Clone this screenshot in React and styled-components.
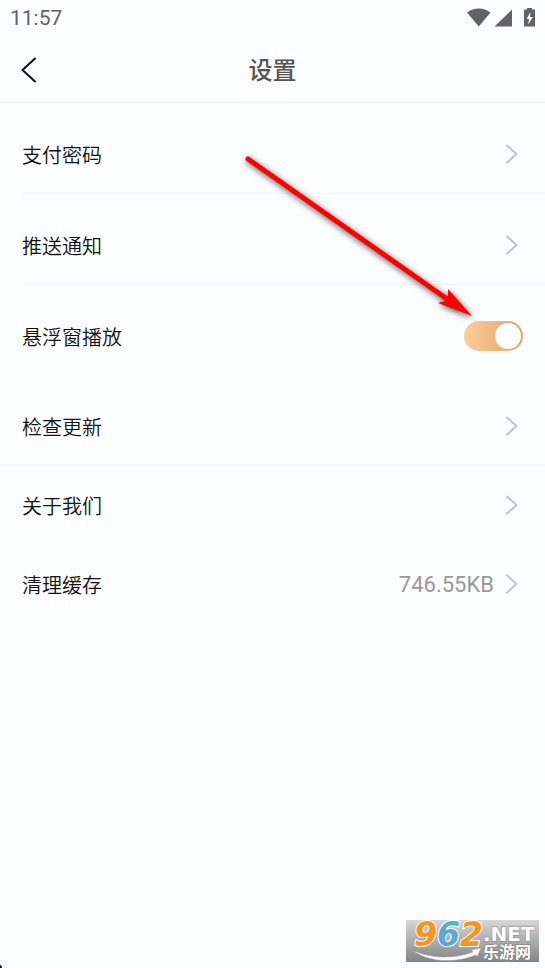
import React, { useState } from "react";
import styled, { createGlobalStyle } from "styled-components";

const SettingsPage = () => {
  const [floating, setFloating] = useState(true);

  return (
    <>
      <GlobalStyle />
      <Screen>
        <StatusBar>
          <time>11:57</time>
          <StatusIcons />
        </StatusBar>
        <NavBar>
          <BackButton type="button" aria-label="返回">
            <svg width="16" height="26" viewBox="0 0 16 26">
              <path d="M14 1.5 L1.5 13 L14 24.5" />
            </svg>
          </BackButton>
          <Title>设置</Title>
        </NavBar>

        <main>
          <LinkRow title="支付密码" spaced divider="inset" />
          <LinkRow title="推送通知" spaced divider="inset" />
          <Row as="label" $spaced>
            <RowTitle>悬浮窗播放</RowTitle>
            <Switch
              type="checkbox"
              role="switch"
              checked={floating}
              onChange={(e) => setFloating(e.target.checked)}
            />
          </Row>
          <LinkRow title="检查更新" spaced divider="full" />
          <LinkRow title="关于我们" divider="clear" />
          <LinkRow title="清理缓存" value="746.55KB" />
        </main>

        <PointerArrow />
        <SiteLogo />
        <Corner viewBox="0 0 3 3" aria-hidden="true">
          <path d="M0 0 H1 V1 H2 V3 H0 Z" fill="#222" />
        </Corner>
      </Screen>
    </>
  );
};

const LinkRow = ({ title, value, spaced, divider }) => (
  <>
    <Row href="#" $spaced={spaced}>
      <RowTitle>{title}</RowTitle>
      <RowEnd>
        {value && <Value>{value}</Value>}
        <Chevron width="12" height="20" viewBox="0 0 12 20" aria-hidden="true">
          <path d="M1 1.5 L10.5 10 L1 18.5" />
        </Chevron>
      </RowEnd>
    </Row>
    {divider && <Divider $kind={divider} />}
  </>
);

// wifi, signal, charging battery
const StatusIcons = () => (
  <svg width="70" height="20" viewBox="0 0 70 20" fill="#636363" aria-hidden="true">
    <path d="M0 4.5 C7 -0.8 16.5 -0.8 23.5 4.5 L11.8 18.5 Z" />
    <path d="M45 1.5 V18.5 H27.5 Z" />
    <path d="M60 0 H65 V1.5 H68 V18.5 H57 V1.5 H60 Z" />
    <path d="M63.5 4 L59.5 11 H62 L61.3 16.5 L65.8 9 H63 Z" fill="#fff" />
  </svg>
);

const PointerArrow = () => (
  <Arrow viewBox="0 0 250 180" aria-hidden="true">
    <path
      d="M13 19 L212 159"
      stroke="#f00"
      strokeWidth="5"
      strokeLinecap="round"
    />
    <path d="M237 176 L203 163 L210 161 L213 156 L213 149 Z" fill="#f00" />
  </Arrow>
);

const SiteLogo = () => (
  <Logo viewBox="0 0 133 42" role="img" aria-label="962.NET 乐游网">
    <defs>
      <linearGradient id="plate" x1="0" y1="0" x2="0" y2="1">
        <stop offset="0" stopColor="#d6d6d6" />
        <stop offset="1" stopColor="#858585" />
      </linearGradient>
    </defs>
    <rect width="133" height="42" fill="url(#plate)" />
    <path
      d="M6 30 C25 39 48 39 67 32 L65 30 L75 28 L71 37 L70 35 C47 44 22 42 6 30 Z"
      fill="#fff"
      stroke="#999"
      strokeWidth="0.5"
    />
    <LogoDigits x="8" y="26">
      <tspan fill="#f7931e">9</tspan>
      <tspan fill="#58a9dc">6</tspan>
      <tspan fill="#f7931e">2</tspan>
    </LogoDigits>
    <LogoDomain x="77" y="21">.NET</LogoDomain>
    <LogoName x="77" y="38">乐游网</LogoName>
  </Logo>
);

// styles
const GlobalStyle = createGlobalStyle`
  * {
    box-sizing: border-box;
  }

  body {
    margin: 0;
    background: #fcfdff;
    font-family: "Noto Sans CJK SC", sans-serif;
  }
`;

const Screen = styled.div`
  position: relative;
  min-height: 100vh;
  overflow: hidden;
`;

const StatusBar = styled.div`
  display: flex;
  align-items: center;
  justify-content: space-between;
  height: 38px;
  padding: 0 8px 2px 10px;
  color: #636363;
  font-family: Roboto, sans-serif;
  font-size: 21px;
`;

const NavBar = styled.header`
  display: grid;
  grid-template-columns: 60px 1fr 60px;
  align-items: center;
  height: 65px;
  border-bottom: 1px solid #ececee;
`;

const BackButton = styled.button`
  display: flex;
  align-items: center;
  height: 100%;
  padding: 0 0 0 21px;
  border: none;
  background: none;
  cursor: pointer;

  path {
    fill: none;
    stroke: #111;
    stroke-width: 2;
    stroke-linecap: round;
    stroke-linejoin: round;
  }
`;

const Title = styled.h1`
  margin: 0;
  padding-bottom: 2px;
  color: #555;
  font-size: 24px;
  line-height: 36px;
  font-weight: 500;
  text-align: center;
`;

const Row = styled.a`
  display: flex;
  align-items: center;
  justify-content: space-between;
  height: 78px;
  margin-top: ${({ $spaced }) => ($spaced ? "12px" : "0")};
  padding: 0 22px;
  color: #111;
  font-size: 20px;
  line-height: 30px;
  text-decoration: none;
  cursor: pointer;
`;

const RowTitle = styled.span`
  padding-top: 2px;
  font-weight: 350;
`;

const Divider = styled.hr`
  height: 1px;
  margin: 0 0 0 ${({ $kind }) => ($kind === "inset" ? "22px" : "0")};
  border: none;
  background: ${({ $kind }) => ($kind === "clear" ? "transparent" : "#f3f4f5")};
`;

const RowEnd = styled.span`
  display: flex;
  align-items: center;
  gap: 12px;
  padding-right: 5px;
`;

const Value = styled.span`
  padding-top: 2px;
  color: #999;
  font-family: Roboto, sans-serif;
  font-size: 22px;
`;

const Chevron = styled.svg`
  path {
    fill: none;
    stroke: #c4c4c6;
    stroke-width: 2;
    stroke-linecap: round;
    stroke-linejoin: round;
  }
`;

const Switch = styled.input`
  appearance: none;
  display: flex;
  align-items: center;
  justify-content: ${({ checked }) => (checked ? "flex-end" : "flex-start")};
  width: 59px;
  height: 30px;
  margin: 0;
  padding: 0 2px;
  border-radius: 15px;
  background: ${({ checked }) =>
    checked ? "linear-gradient(90deg, #fdcd98, #dfa46d)" : "#ddd"};
  cursor: pointer;

  &::before {
    content: "";
    width: 26px;
    height: 26px;
    border-radius: 50%;
    background: #fff;
  }
`;

const Arrow = styled.svg`
  position: absolute;
  top: 140px;
  right: 60px;
  width: 250px;
  height: 180px;
  fill: none;
  pointer-events: none;
  filter: drop-shadow(1px 2px 3px rgba(0, 0, 0, 0.7));
`;

const Logo = styled.svg`
  position: absolute;
  right: 6px;
  bottom: 6px;
  width: 133px;
  height: 42px;
  overflow: visible;
`;

const LogoDigits = styled.text`
  font: italic bold 33px "DejaVu Sans", sans-serif;
  stroke: #fff;
  stroke-width: 2px;
  paint-order: stroke;
`;

const LogoDomain = styled.text`
  font: bold 20px "DejaVu Sans", sans-serif;
  fill: #fff;
  stroke: #888;
  stroke-width: 1px;
  paint-order: stroke;
`;

const LogoName = styled.text`
  font: bold 16px "Noto Sans CJK SC", sans-serif;
  fill: #fff;
  stroke: #777;
  stroke-width: 1px;
  paint-order: stroke;
`;

const Corner = styled.svg`
  position: absolute;
  left: 0;
  bottom: 0;
  width: 3px;
  height: 3px;
`;

export default SettingsPage;
